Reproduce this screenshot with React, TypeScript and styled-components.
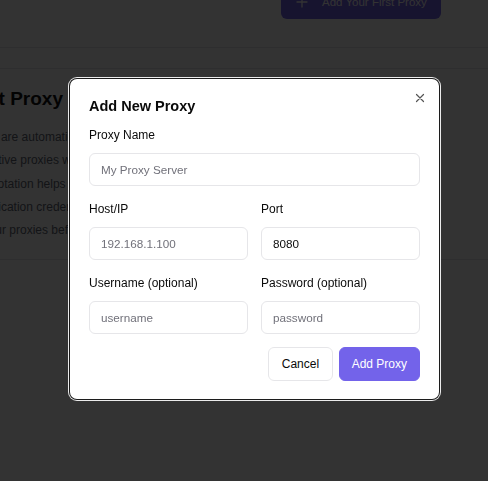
import styled, { createGlobalStyle } from 'styled-components';

const GlobalStyle = createGlobalStyle`
  html, body {
    margin: 0;
    padding: 0;
    background: #ffffff;
    overflow: hidden;
  }
  body {
    font-family: "Liberation Sans", Arial, sans-serif;
    color: #111111;
  }
  * {
    box-sizing: border-box;
  }
`;

const Page = styled.div`
  height: 100vh;
  overflow: hidden;
`;

const Header = styled.header`
  display: flex;
  justify-content: flex-end;
  margin-top: -15px;
  padding: 0 47px 28px 0;
  border-bottom: 1px solid #e5e7eb;
`;

const PrimaryButton = styled.button`
  display: flex;
  align-items: center;
  gap: 14px;
  width: 160px;
  height: 34px;
  padding: 0 14px 0 15px;
  border: none;
  border-radius: 6px;
  background: #7363ea;
  color: #ffffff;
  font-family: inherit;
  font-size: 11.5px;
  white-space: nowrap;
`;

const SubBar = styled.div`
  height: 21px;
  border-bottom: 1px solid #e5e7eb;
`;

const Section = styled.section`
  margin-left: -50px;
  padding: 18px 0 16px;
  border-bottom: 1px solid #e5e7eb;
  white-space: nowrap;
`;

const SectionTitle = styled.h2`
  margin: 0 0 16px;
  font-size: 19px;
  line-height: 23px;
  font-weight: 700;
  color: #111111;
`;

const TipList = styled.ul`
  margin: 0;
  padding: 0;
  list-style: none;

  li {
    font-size: 12px;
    line-height: 23.33px;
    color: #5f6673;
  }
`;

const Overlay = styled.div`
  position: fixed;
  inset: 0;
  display: flex;
  align-items: center;
  justify-content: center;
  padding: 0 0 3px 21px;
  background: rgba(0, 0, 0, 0.8);
`;

const Dialog = styled.div`
  position: relative;
  width: 369px;
  padding: 18px 19px 18px;
  background: #ffffff;
  border-radius: 7px;
  box-shadow: 0 0 0 1px #1c1c1c, 0 0 0 2px #ececec;
`;

const CloseButton = styled.button`
  position: absolute;
  top: 14px;
  right: 14px;
  width: 10px;
  height: 10px;
  padding: 0;
  border: none;
  background: none;
  display: flex;
`;

const Title = styled.h3`
  margin: 0 0 12px;
  font-size: 14.5px;
  line-height: 18px;
  font-weight: 700;
  color: #0a0a0a;
`;

const Field = styled.div`
  display: flex;
  flex-direction: column;
  margin-bottom: 15px;
`;

const Row = styled.div`
  display: grid;
  grid-template-columns: 1fr 1fr;
  column-gap: 13px;
`;

const Label = styled.label`
  font-size: 12px;
  line-height: 16px;
  margin-bottom: 10px;
  color: #0a0a0a;
`;

const Input = styled.input`
  height: 33px;
  width: 100%;
  padding: 0 11px;
  border: 1px solid #e6e6e9;
  border-radius: 6px;
  font-family: inherit;
  font-size: 11.7px;
  color: #0a0a0a;
  background: #ffffff;
  outline: none;

  &::placeholder {
    color: #71717a;
  }
`;

const Actions = styled.div`
  display: flex;
  justify-content: flex-end;
  gap: 6px;
  margin-top: -2px;
`;

const ActionButton = styled.button<{ $primary?: boolean }>`
  height: 34px;
  padding: 0 ${(p) => (p.$primary ? '12px' : '12.5px')};
  border-radius: 6px;
  border: 1px solid ${(p) => (p.$primary ? '#7363ea' : '#e6e6e9')};
  background: ${(p) => (p.$primary ? '#7363ea' : '#ffffff')};
  color: ${(p) => (p.$primary ? '#ffffff' : '#0a0a0a')};
  font-family: inherit;
  font-size: 12px;
`;

const tips = [
  '• Proxies are automatically rotated between requests',
  '• Only active proxies will be used for scraping',
  '• Timed rotation helps avoid rate limits and bans',
  '• Authentication credentials are stored locally',
  '• Test your proxies before starting a large job',
];

export default function App() {
  return (
    <>
      <GlobalStyle />
      <Page>
        <Header>
          <PrimaryButton>
            <svg width="12" height="12" viewBox="0 0 12 12" fill="none">
              <path d="M6 1v10M1 6h10" stroke="#ffffff" strokeWidth="1.3" strokeLinecap="round" />
            </svg>
            Add Your First Proxy
          </PrimaryButton>
        </Header>
        <SubBar />
        <Section>
          <SectionTitle>About Proxy Rotation</SectionTitle>
          <TipList>
            {tips.map((tip) => (
              <li key={tip}>{tip}</li>
            ))}
          </TipList>
        </Section>
      </Page>
      <Overlay>
        <Dialog>
          <CloseButton aria-label="Close">
            <svg width="10" height="10" viewBox="0 0 10 10" fill="none">
              <path d="M1.5 1.5l7 7M8.5 1.5l-7 7" stroke="#555555" strokeWidth="1.2" strokeLinecap="round" />
            </svg>
          </CloseButton>
          <Title>Add New Proxy</Title>
          <Field>
            <Label>Proxy Name</Label>
            <Input placeholder="My Proxy Server" />
          </Field>
          <Row>
            <Field>
              <Label>Host/IP</Label>
              <Input placeholder="192.168.1.100" />
            </Field>
            <Field>
              <Label>Port</Label>
              <Input defaultValue="8080" />
            </Field>
          </Row>
          <Row>
            <Field>
              <Label>Username (optional)</Label>
              <Input placeholder="username" />
            </Field>
            <Field>
              <Label>Password (optional)</Label>
              <Input placeholder="password" />
            </Field>
          </Row>
          <Actions>
            <ActionButton>Cancel</ActionButton>
            <ActionButton $primary>Add Proxy</ActionButton>
          </Actions>
        </Dialog>
      </Overlay>
    </>
  );
}
